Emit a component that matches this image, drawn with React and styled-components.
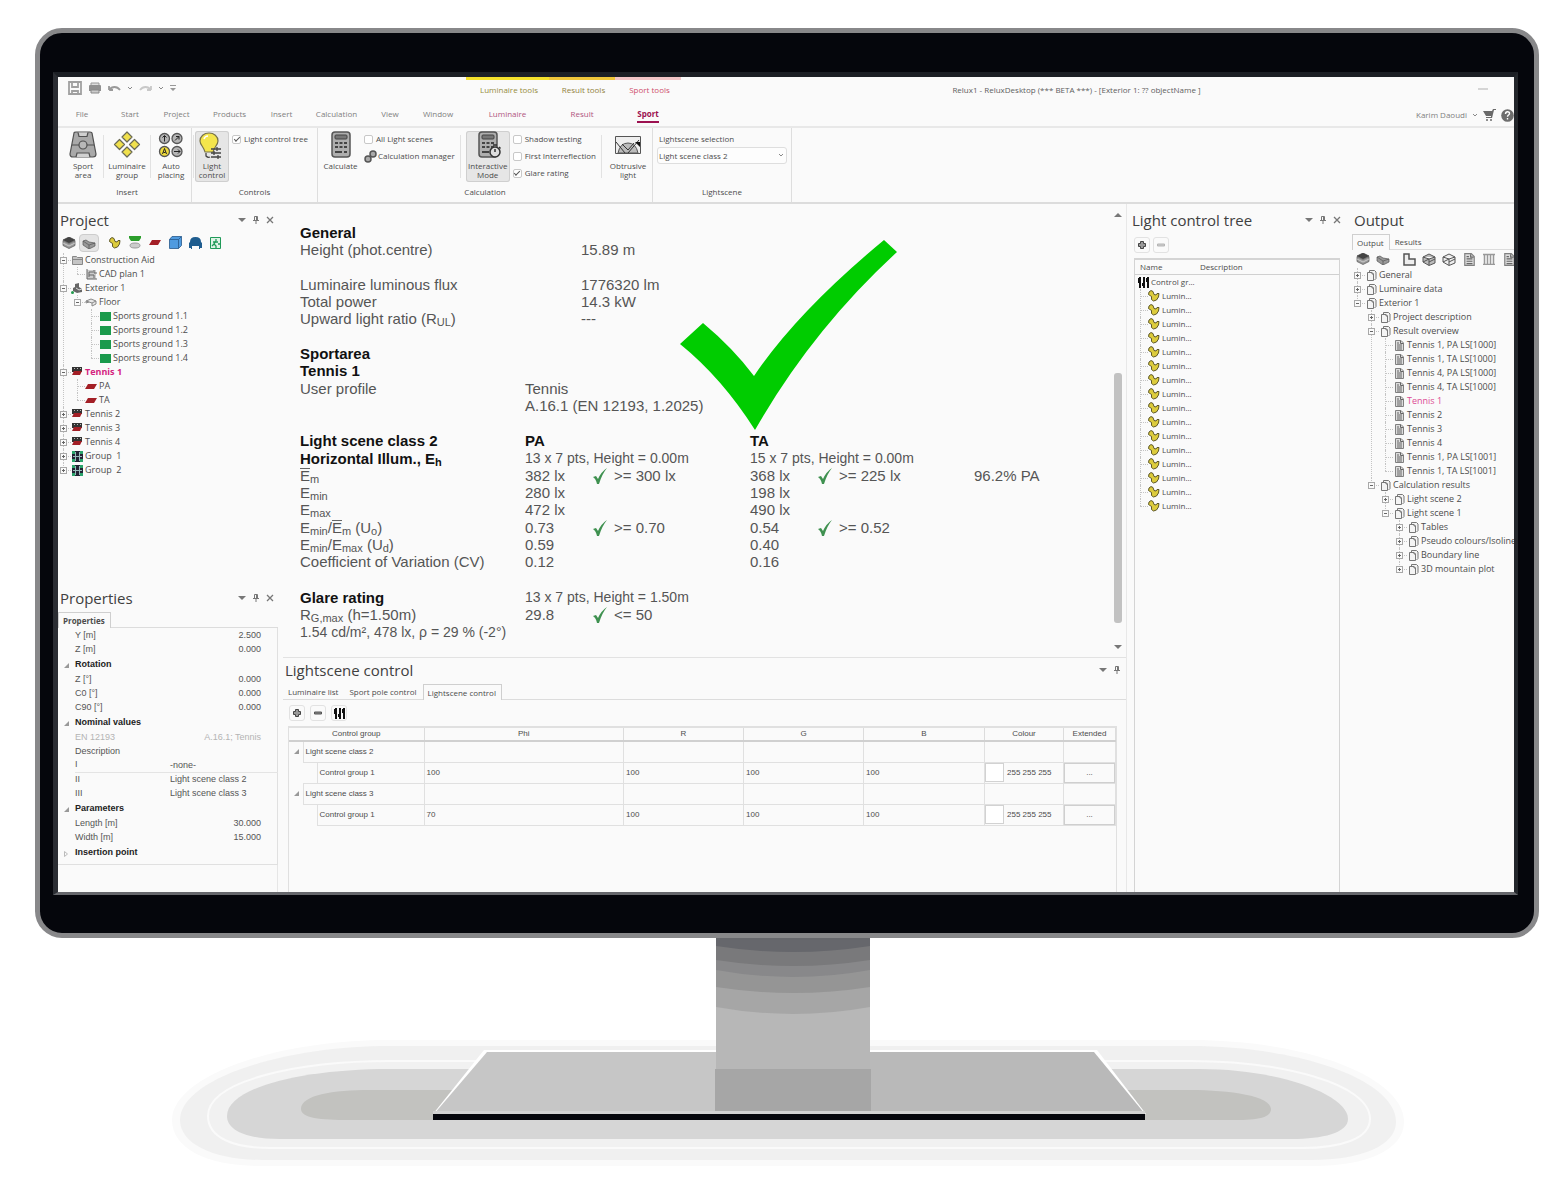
import React, { useState } from 'react';
import styled, { createGlobalStyle, css } from 'styled-components';

const GlobalStyle = createGlobalStyle`
    * {
        box-sizing: border-box;
    }
    body {
        margin: 0;
        background: #fff;
        color: #4c4c4c;
        font-family: "Open Sans", "Noto Sans", sans-serif;
        font-size: 9px;
        line-height: 14px;
    }
    button, input, select {
        font: inherit;
        color: inherit;
        margin: 0;
    }
    button {
        background: none;
        border: none;
        padding: 0;
    }
    ul {
        list-style: none;
        margin: 0;
        padding: 0;
    }
    svg {
        display: block;
        flex: none;
    }
    table {
        border-collapse: collapse;
        border-spacing: 0;
    }
    th, td {
        padding: 0;
        text-align: left;
    }
`

/* ---------- monitor ---------- */

const Page = styled.main`
    padding: 28px 27px 0 35px;
    overflow: hidden;
`

const Monitor = styled.div`
    background: #05060c;
    border: 5px solid #88888a;
    border-radius: 27px;
    padding: 39px 16px 38px 13px;
`

const Screen = styled.div`
    background: #fafafa;
    border-style: solid;
    border-width: 5px 4px 3px 5px;
    border-color: #1c1f25 #23262b #66676c #2b2d33;
    overflow: hidden;
`

const StandWrap = styled.div`
    margin: 0 -27px 0 -35px;
    & svg {
        width: 100%;
        height: auto;
    }
`

/* ---------- title bar and tabs ---------- */

const TitleBar = styled.header`
    display: flex;
    height: 24px;
    font-size: 8px;
`

const QuickBar = styled.div`
    width: 408px;
    display: flex;
    align-items: center;
    gap: 6px;
    padding: 0 0 2px 10px;
    color: #9a9a9a;
`

const ToolTab = styled.div`
    width: ${p => p.$w}px;
    border-top: 3px solid ${p => p.$bar};
    color: ${p => p.$color};
    text-align: center;
    padding: 3px 0 0 3px;
    white-space: nowrap;
`

const WindowTitle = styled.div`
    flex: 1;
    text-align: center;
    padding-top: 6px;
    color: #5e5e5e;
    white-space: nowrap;
`

const WindowButtons = styled.div`
    width: 42px;
    padding: 11px 0 0 6px;
    color: #b0b0b0;
`

const TabBar = styled.nav`
    display: flex;
    height: 27px;
    padding-top: 3px;
    border-bottom: 2px solid #e8e8e8;
    font-size: 8px;
`

const RibbonTab = styled.button`
    width: ${p => p.$w}px;
    color: ${p => p.$accent ? '#b05580' : '#808080'};
    & span {
        display: inline-block;
        border-bottom: 2px solid transparent;
    }
    ${p => p.$active && css`
        color: #9c1150;
        font-weight: 700;
        & span {
            border-color: #9c1150;
        }
    `}
`

const Account = styled.div`
    margin-left: auto;
    display: flex;
    align-items: center;
    gap: 5px;
    color: #808080;
    white-space: nowrap;
    & svg {
        color: #6a6a6a;
    }
`

/* ---------- ribbon ---------- */

const Ribbon = styled.div`
    display: flex;
    height: 76px;
    padding-left: 5px;
    border-bottom: 2px solid #dcdcdc;
    font-size: 8px;
`

const Group = styled.section`
    width: ${p => p.$w}px;
    display: flex;
    flex-direction: column;
    padding-top: 3px;
    border-right: 1px solid #dedede;
    & h3 {
        margin: 3px 0 0;
        font-size: 8px;
        font-weight: 400;
        text-align: center;
    }
`

const GroupBody = styled.div`
    display: flex;
    height: 51px;
    & > * {
        flex-shrink: 0;
    }
`

const BigButton = styled.button`
    width: ${p => p.$w}px;
    height: 51px;
    display: flex;
    flex-direction: column;
    align-items: center;
    gap: 2px;
    line-height: 9px;
    border-radius: 3px;
    ${p => p.$pressed && css`
        background: #e6e6e6;
        box-shadow: inset 0 0 0 1px #cfcfcf;
    `}
`

const Divider = styled.div`
    width: 1px;
    margin: 4px ${p => p.$gap || 0}px;
    background: #e2e2e2;
`

const CheckList = styled.div`
    display: flex;
    flex-direction: column;
    gap: 3px;
    padding: 1px 0 0 ${p => p.$pad || 3}px;
    white-space: nowrap;
`

const CheckLabel = styled.label`
    display: flex;
    align-items: center;
    gap: 3px;
    & input {
        appearance: none;
        width: 9px;
        height: 9px;
        border: 1px solid #c8c8c8;
        border-radius: 2px;
        background: #fff;
        display: grid;
        place-items: center;
    }
    & input:checked::after {
        content: "";
        width: 5px;
        height: 2px;
        margin-bottom: 2px;
        border-left: 1px solid #555;
        border-bottom: 1px solid #555;
        transform: rotate(-45deg);
    }
`

const LinkButton = styled.button`
    display: flex;
    align-items: center;
    gap: 1px;
    height: 14px;
`

const SelectField = styled.label`
    display: flex;
    flex-direction: column;
    gap: 1px;
    padding: 1px 4px 0 4px;
    flex: 1;
    & > span {
        padding-left: 2px;
    }
`

const SelectBox = styled.div`
    position: relative;
    & select {
        appearance: none;
        width: 100%;
        height: 17px;
        border: 1px solid #dedede;
        border-radius: 3px;
        background: #fdfdfd;
        padding: 0 1px;
    }
    & svg {
        position: absolute;
        right: 3px;
        top: 6px;
        pointer-events: none;
    }
`

/* ---------- panels ---------- */

const Workspace = styled.div`
    display: flex;
    min-height: 688px;
`

const Side = styled.aside`
    width: ${p => p.$w}px;
    flex: none;
    display: flex;
    flex-direction: column;
    overflow: hidden;
    padding-left: ${p => p.$pad || 0}px;
`

const Centre = styled.div`
    flex: 1;
    min-width: 0;
    display: flex;
    flex-direction: column;
    padding-left: 5px;
    border-right: 1px solid #e8e8e8;
`

const PanelHead = styled.div`
    display: flex;
    align-items: center;
    height: ${p => p.$low ? 24 : 28}px;
    padding: ${p => p.$low ? 0 : 4}px 4px 0 2px;
    flex: none;
    & h2 {
        margin: 0;
        flex: 1;
        font-size: 15px;
        line-height: 20px;
        font-weight: 400;
        color: #404040;
        white-space: nowrap;
    }
    & div {
        display: flex;
        align-items: center;
        gap: 5px;
        color: #777;
    }
`

const ToolRow = styled.div`
    display: flex;
    align-items: center;
    height: ${p => p.$h || 18}px;
    gap: ${p => p.$gap || 0}px;
    padding-left: ${p => p.$pad || 0}px;
    flex: none;
`

const ToolButton = styled.button`
    width: 20px;
    height: 18px;
    display: grid;
    place-items: center;
    flex: none;
    border-radius: 4px;
    background: ${p => p.$pressed ? '#e4e4e4' : 'none'};
    border: 1px solid ${p => p.$pressed ? '#cdcdcd' : 'transparent'};
    margin-right: ${p => p.$after || 0}px;
`

const SmallButton = styled.button`
    width: 16px;
    height: 16px;
    display: grid;
    place-items: center;
    border: 1px solid #e2e2e2;
    border-radius: 3px;
`

const Tabs = styled.div`
    display: flex;
    height: 18px;
    padding-top: 2px;
    border-bottom: 1px solid #dcdcdc;
    font-size: 8px;
    flex: none;
`

const PanelTab = styled.button`
    padding: 0 5px 0 4px;
    white-space: nowrap;
    border: solid transparent;
    border-width: 1px 1px 0;
    ${p => p.$active && css`
        border-color: #cfcfcf;
        background: #fafafa;
        margin-bottom: -1px;
        font-weight: ${p.$bold ? 700 : 400};
    `}
`

/* ---------- trees ---------- */

const Branch = styled.ul`
    & & {
        margin-left: 14px;
    }
    & > li {
        position: relative;
    }
    /* dotted guide lines behind the toggles */
    & > li::before {
        content: "";
        position: absolute;
        left: 5px;
        top: 0;
        bottom: 0;
        border-left: 1px dotted #c4c4c4;
    }
    & > li:last-child::before {
        bottom: auto;
        height: 7px;
    }
    & > li::after {
        content: "";
        position: absolute;
        left: 5px;
        top: 7px;
        width: 8px;
        border-top: 1px dotted #c4c4c4;
    }
`

const Row = styled.div`
    position: relative;
    z-index: 1;
    display: flex;
    align-items: center;
    height: 14px;
    font-size: ${p => p.$size || 9}px;
    white-space: pre;
    color: ${p => p.$color || '#4c4c4c'};
    font-weight: ${p => p.$bold ? 700 : 400};
`

const ToggleSlot = styled.span`
    width: 11px;
    display: grid;
    place-items: center;
    flex: none;
`

const Toggle = styled.button`
    width: 7px;
    height: 7px;
    border: 1px solid #a8a8a8;
    background: #fafafa;
    display: grid;
    place-items: center;
`

const IconSlot = styled.span`
    width: 16px;
    display: grid;
    place-items: center;
    flex: none;
`

const ControlBox = styled.div`
    flex: 1;
    margin: 0 5px 0 4px;
    border: solid #d4d4d4;
    border-width: 2px 1px 0;
`

const ControlHead = styled.div`
    display: grid;
    grid-template-columns: 60px 1fr;
    height: 15px;
    padding-left: 5px;
    border-bottom: 1px solid #d0d0d0;
    font-size: 8px;
`

/* ---------- properties ---------- */

const PropTable = styled.table`
    width: 100%;
    font-family: "Liberation Sans", Arial, sans-serif;
    font-size: 9px;
    border-right: 1px solid #e0e0e0;
    border-bottom: 1px solid #e0e0e0;
    table-layout: fixed;
    & tbody::after {
        content: "";
        display: block;
        height: 4px;
    }
`

const PropRow = styled.tr`
    height: ${p => p.$head ? 16 : 14}px;
    line-height: 13px;
    color: ${p => p.$dim ? '#b4b4b4' : p.$head ? '#222' : '#555'};
    & th {
        font-weight: ${p => p.$head ? 700 : 400};
        vertical-align: middle;
    }
    & td {
        padding-right: 16px;
        vertical-align: bottom;
        text-align: ${p => p.$left ? 'left' : 'right'};
    }
    & td:first-child {
        padding: 0 0 3px 6px;
    }
    ${p => p.$line && css`
        & th:last-of-type, & td:last-child {
            border-bottom: 1px solid #e4e4e4;
        }
    `}
`

const PropFill = styled.div`
    flex: 1;
    border-right: 1px solid #e6e6e6;
`

/* ---------- report ---------- */

const ReportArea = styled.div`
    position: relative;
    flex: 1;
    display: flex;
    justify-content: space-between;
    padding: 20px 4px 0 17px;
    overflow: hidden;
`

const Report = styled.article`
    font-family: "Liberation Sans", Arial, sans-serif;
    font-size: 15px;
    line-height: 17px;
    color: #555;
    & table {
        table-layout: fixed;
        white-space: nowrap;
    }
    & table + table {
        margin-top: 18px;
    }
    & th {
        font-weight: 400;
    }
    & tr {
        height: 17px;
    }
    & sub {
        font-size: 11px;
        line-height: 0;
        vertical-align: -2px;
    }
    & small {
        font-size: 14px;
    }
    & strong {
        color: #111;
    }
    & tbody + tbody::before {
        content: "";
        display: block;
        height: 1px;
    }
`

const Limit = styled.span`
    display: flex;
    align-items: center;
    gap: 7px;
`

const BarLetter = styled.span`
    display: inline-block;
    line-height: 13px;
    border-top: 1px solid #666;
`

const BigTick = styled.svg`
    position: absolute;
    left: 396px;
    top: 35px;
`

const ScrollBar = styled.div`
    width: 8px;
    margin: -12px 0 7px;
    display: flex;
    flex-direction: column;
    align-items: center;
    color: #777;
`

const Thumb = styled.div`
    width: 8px;
    height: 250px;
    margin: auto 0 22px;
    border-radius: 3px;
    background: #c2c2c2;
`

/* ---------- lightscene control ---------- */

const ScenePanel = styled.section`
    border-top: 1px solid #e2e2e2;
    min-height: 235px;
    display: flex;
    flex-direction: column;
`

const SceneBox = styled.div`
    flex: 1;
    margin: 0 9px 0 5px;
    border: solid #e0e0e0;
    border-width: 2px 1px 0;
`

const SceneTable = styled.table`
    width: 100%;
    table-layout: fixed;
    font-family: "Liberation Sans", Arial, sans-serif;
    font-size: 8px;
    & thead th {
        height: 13px;
        line-height: 12px;
        font-weight: 400;
        text-align: center;
        border-right: 1px solid #dcdcdc;
        border-bottom: 2px solid #d0d0d0;
    }
    & tbody tr {
        height: 21px;
    }
    & tbody td {
        border: 1px solid #e0e0e0;
        padding-left: 2px;
    }
    & tbody td.gutter {
        border: none;
        padding: 0 0 0 5px;
    }
    & tbody td.flush {
        padding: 0;
    }
`

const ColourCell = styled.div`
    display: flex;
    align-items: center;
    gap: 3px;
    white-space: nowrap;
    & i {
        width: 19px;
        height: 19px;
        border: 1px solid #d2d2d2;
        background: #fff;
    }
`

const MoreButton = styled.button`
    display: block;
    width: 100%;
    height: 20px;
    border: 1px solid #cfcfcf;
`

/* ---------- icons ---------- */

const Chevron = ({ size = 6 }) => (
    <svg width={size} height="5" viewBox="0 0 6 5" fill="none" stroke="#888"><path d="M1 1l2 2 2-2" /></svg>
)

const Arrow = ({ up }) => (
    <svg width="8" height="5" viewBox="0 0 8 5" fill="currentColor"><path d={up ? 'M0 5h8L4 1z' : 'M0 0h8L4 4z'} /></svg>
)

/* drop-down mark at the end of the quick access bar */
const MoreMark = () => (
    <svg width="6" height="7" viewBox="0 0 6 7" fill="#999"><path d="M0 0h6v1H0zM0 3h6L3 6z" /></svg>
)

const Pin = () => (
    <svg width="10" height="10" viewBox="0 0 10 10" fill="none" stroke="currentColor"><path d="M3.500 1.500h3v4h-3zM2 5.500h6M5 5.500V9M5.500 1.500v4" /></svg>
)

const Cross = () => (
    <svg width="8" height="8" viewBox="0 0 8 8" fill="none" stroke="currentColor" strokeWidth="1.300"><path d="M1 1l6 6M7 1L1 7" /></svg>
)

const Plus = () => (
    <svg width="10" height="10" viewBox="0 0 10 10" fill="#999" stroke="#444"><path d="M3.500 1.500h3v2h2v3h-2v2h-3v-2h-2v-3h2z" /></svg>
)

const Minus = ({ dim }) => (
    <svg width="10" height="10" viewBox="0 0 10 10" fill={dim ? '#ccc' : '#888'} stroke={dim ? '#b5b5b5' : '#555'}><path d="M1.500 4h7v2h-7z" /></svg>
)

const Sliders = () => (
    <svg width="11" height="11" viewBox="0 0 11 11" fill="#111"><path d="M1 0h2v11H1zM5 0h2v11H5zM9 0h2v11H9zM0 1h3v5H0zM4 6h3v3H4zM8 1h3v4H8z" /></svg>
)

const Save = () => (
    <svg width="14" height="14" viewBox="0 0 14 14" fill="none" stroke="#a0a0a0" strokeWidth="1.800"><path d="M1 1h12v12H1zM4 1v5h6V1M4 13v-3h6v3" /></svg>
)

const Printer = () => (
    <svg width="14" height="14" viewBox="0 0 14 14"><path d="M3 2h8v3H3z" fill="#ddd" stroke="#999" /><path d="M1 5q0-1 1-1h10q1 0 1 1v5H1z" fill="#909090" /><path d="M3 9h8v3H3z" fill="#ccc" stroke="#888" /></svg>
)

const Undo = ({ flip }) => (
    <svg width="13" height="8" viewBox="0 0 13 8" fill="none" stroke={flip ? '#c8c8c8' : '#999'} strokeWidth="1.800">
        <path d={flip ? 'M12 6H8M12 6V2M12 6C9 2 4 2 1 6' : 'M1 6h4M1 6V2M1 6c3-4 8-4 11 0'} />
    </svg>
)

const Cart = () => (
    <svg width="13" height="12" viewBox="0 0 13 12" fill="currentColor"><path d="M13 0v1h-2l-2 8H3V8h5v-1H3L0 2h9l1-2z" /><circle cx="4" cy="11" r="1" /><circle cx="8" cy="11" r="1" /></svg>
)

const Help = () => (
    <svg width="13" height="13" viewBox="0 0 13 13"><circle cx="6.500" cy="6.500" r="6.300" fill="#6e6e6e" /><path d="M4.500 5c0-3 4-3 4-.5 0 1.500-2 1.500-2 3.200M6.500 9v1.500" stroke="#fff" strokeWidth="1.400" fill="none" /></svg>
)

const SportArea = () => (
    <svg width="28" height="28" viewBox="0 0 28 28" fill="#a9a9a9" stroke="#505050" strokeWidth="1.200">
        <path d="M5 2q0-1 2-1h14q2 0 2 1l4 21q0 3-3 3H4q-3 0-3-3z" /><path d="M9 1.500l1 4h8l1-4M7 26l1-4h12l1 4" fill="#d0d0d0" />
        <path d="M3 14h7M18 14h7" /><circle cx="14" cy="14" r="4" fill="#b8b8b8" />
    </svg>
)

const Diamonds = () => (
    <svg width="28" height="28" viewBox="0 0 28 28" fill="#f0e04c" stroke="#6a6a55" strokeWidth="1.200">
        <path d="M14 1l5 5-5 5-5-5zM14 16l5 5-5 5-5-5zM6.500 8.500l5 5-5 5-5-5zM21.500 8.500l5 5-5 5-5-5z" strokeLinejoin="round" />
    </svg>
)

const AutoPlacing = () => (
    <svg width="28" height="28" viewBox="0 0 28 28" fill="#b5b5b5" stroke="#555" strokeWidth="1.300">
        <circle cx="7.500" cy="7.500" r="5" /><circle cx="20" cy="7.500" r="5" /><circle cx="7.500" cy="20.500" r="5" fill="#f0dc3c" /><circle cx="20" cy="20.500" r="5" />
        <path d="M7.500 10.500V5M5.500 6.500l2-2 2 2M18 9.500l4-4M19 5.500h3v3M17 20.500h6M21 18.500l2 2-2 2M5.500 23l2-5.500 2 5.500M6.500 21.500h2" fill="none" stroke="#222" strokeWidth="1" />
    </svg>
)

const Bulb = () => (
    <svg width="28" height="28" viewBox="0 0 28 28">
        <path d="M11 2c-5 0-9 3.500-9 8 0 4 4 6 5 11h8c1-5 5-7 5-11 0-4.500-4-8-9-8z" fill="#f4e54c" stroke="#77724a" strokeWidth="1.200" />
        <path d="M6 8q1-3 4-3" fill="none" stroke="#fff" strokeWidth="1.500" />
        <path d="M8 22v3q2 2 4 1M13 18h10M13 22h10M13 26h10M19 16v4M16 20v4M20 24v4" stroke="#444" strokeWidth="1.300" fill="none" />
    </svg>
)

const Calculator = ({ timer }) => (
    <svg width="28" height="28" viewBox="0 0 28 28">
        <rect x="5" y="1" width="18" height="25" rx="3" fill="#aeaeae" stroke="#555" strokeWidth="1.500" />
        <rect x="8" y="4" width="12" height="4" rx="1" fill="#777" stroke="#444" />
        <path d="M8 12h3M12.500 12h3M17 12h3M8 16h3M12.500 16h3M17 16h3M8 21h7M17 21h3" stroke="#444" strokeWidth="2" />
        {timer && <g stroke="#333" strokeWidth="1.500"><circle cx="21" cy="21" r="5" fill="#ddd" /><path d="M21 21v-3M19 14h4M25 16l1.500 1.500" /></g>}
    </svg>
)

const Obtrusive = () => (
    <svg width="28" height="28" viewBox="0 0 28 28">
        <path d="M1.500 5.500h25v17h-25z" fill="#eee" stroke="#555" /><path d="M4 22q2-10 10-10t10 10z" fill="#bbb" stroke="#555" />
        <path d="M2 11l9 11M14 22L25 9M8 13l6 6 6-7" stroke="#333" fill="none" /><path d="M21 11h5v5z" fill="#111" />
    </svg>
)

const Gears = () => (
    <svg width="13" height="13" viewBox="0 0 13 13" fill="#aaa" stroke="#555" strokeWidth="1.500"><circle cx="4" cy="9" r="3" /><circle cx="9" cy="4" r="3" /></svg>
)

const Tick = () => (
    <svg width="14" height="16" viewBox="0 0 14 16" fill="#3f9150"><path d="M0 9l3-1 2 3Q8 4 14 0 9 6 6 16H4Q3 11 0 9z" /></svg>
)

const Lamp = () => (
    <svg width="12" height="12" viewBox="0 0 12 12" fill="#dccb3c" stroke="#4f4a1c" strokeWidth=".9"><path d="M1 2l2-1.500 2 1 1 3 2 .5 1-1.500 2 0-.5 3.500-2 3-3 1-2-1.500 0-3-3-2z" /></svg>
)

const Layers = ({ open }) => (
    <svg width="14" height="12" viewBox="0 0 14 12" strokeWidth=".7">
        {!open && <path d="M7 0l6 3-6 3-6-3z" fill="#444" stroke="#333" />}
        <path d={open ? 'M1 4l3-1 3 2 6 1v3l-6 3-6-4z' : 'M1 3.500l6 3 6-3v5l-6 3-6-3z'} fill="#999" stroke="#555" />
        {open && <path d="M1 4l6 4 6-2M7 8v4" fill="none" stroke="#555" />}
        {!open && <path d="M1 6l6 3 6-3" fill="none" stroke="#ddd" />}
    </svg>
)

const Box3d = ({ open }) => (
    <svg width="14" height="13" viewBox="0 0 14 13" fill={open ? '#eee' : '#bbb'} stroke="#555"><path d="M1 4l6-3 6 3v6l-6 2.500L1 9zM1 4l6 2 6-2M7 6v6M1 9l6-3M7 9l6-3" /></svg>
)

const LShape = () => (
    <svg width="13" height="13" viewBox="0 0 13 13" fill="#eee" stroke="#555" strokeWidth="1.500"><path d="M1 1h5v5h6v6H1z" /></svg>
)

const Doc = ({ w = 9, h = 11 }) => (
    <svg width={w} height={h} viewBox="0 0 9 11"><path d="M.5.5H6L8.500 3v7.500h-8z" fill="#ddd" stroke="#808080" /><path d="M2 3h2M2 5h5M2 7h5M2 9h5M5.500 1v2.500H8" stroke="#666" fill="none" /></svg>
)

const Columns = () => (
    <svg width="12" height="12" viewBox="0 0 12 12" fill="none" stroke="#999"><path d="M0 1.500h12M0 11.500h12M1.500 2v10M4.500 2v10M7.500 2v10M10.500 2v10" strokeWidth="1.500" /></svg>
)

const Pages = () => (
    <svg width="11" height="11" viewBox="0 0 11 11" fill="#f4f4f4" stroke="#777"><path d="M3.500 3V.5H8.500L10 2v6.500L8.500 10M1.500 2.500H6L7.500 4v6.500h-6zM6 2.500V4h1.500" /></svg>
)

const Folder = () => (
    <svg width="11" height="9" viewBox="0 0 11 9"><path d="M.5 8.500v-8h4l1 1h5v7z" fill="#c4c4c4" stroke="#888" /><path d="M1 3.500h9" stroke="#888" /></svg>
)

const Cad = () => (
    <svg width="11" height="11" viewBox="0 0 11 11"><path d="M1 1h9v9H1z" fill="#ccc" /><path d="M1 0v10h10M3 8V3h4M3 6h5v3M8 1v3h3" stroke="#666" fill="none" /></svg>
)

const Exterior = () => (
    <svg width="12" height="11" viewBox="0 0 12 11"><path d="M4 1l4-1v4l3 2v3L6 10 2 8V5l2-1z" fill="#666" /><path d="M5 5l3 2 3-1" stroke="#ddd" fill="none" /><circle cx="1.500" cy="9.500" r="1.500" fill="#1f9a4c" /></svg>
)

const Floor = () => (
    <svg width="12" height="9" viewBox="0 0 12 9" fill="#e8e8e8" stroke="#888"><path d="M1 3l5-2 5 2v3L7 8V5L4 4 1 5zM1 3l3 1M7 5l4-2" /></svg>
)

const Green = () => (
    <svg width="11" height="9" viewBox="0 0 11 9"><path d="M0 0h11v9H0z" fill="#1a9a4c" /></svg>
)

const Court = () => (
    <svg width="12" height="5" viewBox="0 0 12 5"><path d="M3 0h9L9 5H0z" fill="#a31f26" /></svg>
)

const Courts = () => (
    <svg width="12" height="10" viewBox="0 0 12 10"><path d="M1 0h10v5H1z" fill="#333" /><path d="M3 1.500h1M6 1.500h1M9 1.500h1" stroke="#bbb" /><path d="M3 4h8L9 8H1z" fill="#a31f26" /></svg>
)

const GroupIcon = () => (
    <svg width="11" height="11" viewBox="0 0 11 11"><path d="M0 0h11v11H0z" fill="#223" /><path d="M0 0h3v3H0zM8 0h3v3H8zM0 8h3v3H0zM8 8h3v3H8z" fill="#2aa36a" /><path d="M3.500 1v9M7.500 1v9M1 5.500h9" stroke="#9bb" /></svg>
)

const Spot = () => (
    <svg width="14" height="13" viewBox="0 0 14 13"><path d="M1 0h12v2l-2 3H3L1 2z" fill="#2c9e2c" /><ellipse cx="7" cy="9.500" rx="5" ry="2.500" fill="#ccc" stroke="#999" /></svg>
)

const Cube = () => (
    <svg width="13" height="13" viewBox="0 0 13 13" fill="#4f9be0" stroke="#27588a" strokeWidth=".8"><path d="M.5 3.500L3 .5h9.500v9l-3 3h-9zM.5 3.500h9v9M9.500 3.500l3-3" /></svg>
)

const Chair = () => (
    <svg width="13" height="12" viewBox="0 0 13 12"><path d="M1 5q0-5 5.500-5T12 5l1 1v5h-2v1h-1V9H3v3H2v-1H0V6z" fill="#1f5d8f" /></svg>
)

const Exit = () => (
    <svg width="11" height="12" viewBox="0 0 11 12"><path d="M.5.500h10v11H.5z" fill="#dff2e6" stroke="#1f9a58" /><path d="M6 2v2M3 5h5M6 4L4 7l2 2v2M4 7l-2 2M8 7h2" stroke="#1f9a58" fill="none" strokeWidth="1.300" /></svg>
)

const Marker = ({ open }) => (
    <svg width="5" height="6" viewBox="0 0 5 6">{open ? <path d="M5 0v5H0z" fill="#999" /> : <path d="M.5.500l3 2.500-3 2.500z" fill="none" stroke="#bbb" />}</svg>
)

/* the neck darkens in curved bands towards the monitor */
const neckBands = [
    [69, 76, '#a6a6a6'],
    [49, 55, '#959595'],
    [32, 39, '#88888a'],
    [22, 28, '#79797b'],
    [8, 14, '#66676c'],
]

const Stand = () => (
    <svg viewBox="0 0 1566 265" aria-hidden="true">
        <path d="M172 182C172 140 270 102 390 102h800c120 0 214 38 214 82 0 28-38 44-90 44H260c-54 0-88-18-88-46z" fill="#fafafa" />
        <path d="M180 182C180 142 280 108 390 108h800c110 0 206 34 206 76 0 24-36 38-84 38H262c-48 0-82-16-82-40z" fill="#f0f0f0" />
        <path d="M208 178C208 142 300 123 390 123h800c90 0 180 22 180 58 0 20-30 29-68 29H270c-36 0-62-10-62-32z" fill="#f1f1f1" stroke="#fafafa" strokeWidth="2" />
        <path d="M227 178C227 150 300 131 390 131h810c80 0 148 26 148 50 0 14-26 20-56 20H280c-32 0-53-8-53-23z" fill="#d6d6d6" />
        <path d="M301 171c0-14 32-19 69-19h820c40 0 81 6 81 19s-30 11-61 11H350c-30 0-49-2-49-11z" fill="#c2c2bf" />
        <path d="M484 112h613l49 64H433z" fill="#fff" />
        <path d="M487 114h229v62H434z" fill="#c6c6c6" />
        <path d="M870 114h224l51 62H870z" fill="#b9b9b9" />
        <path d="M716 0h154v132H716z" fill="#b7b7b7" />
        {neckBands.map(([edge, mid, fill]) => (
            <path key={edge} d={`M716 0h154v${edge}Q793 ${mid * 2 - edge} 716 ${edge}z`} fill={fill} />
        ))}
        <path d="M715 131h156v44H715z" fill="#a6a6a6" />
        <path d="M433 173h712v3H433z" fill="#d2d2d2" />
        <path d="M433 176h712v6H433z" fill="#05060c" />
    </svg>
)

const icons = {
    folder: <Folder />, cad: <Cad />, exterior: <Exterior />, floor: <Floor />, green: <Green />,
    court: <Court />, courts: <Courts />, group: <GroupIcon />, pages: <Pages />, doc: <Doc />, lamp: <Lamp />,
}

/* ---------- data ---------- */

const projectTree = [
    { label: 'Construction Aid', icon: 'folder', open: true, items: [{ label: 'CAD plan 1', icon: 'cad' }] },
    {
        label: 'Exterior 1', icon: 'exterior', open: true, items: [{
            label: 'Floor', icon: 'floor', open: true,
            items: [1, 2, 3, 4].map(n => ({ label: `Sports ground 1.${n}`, icon: 'green' })),
        }],
    },
    { label: 'Tennis 1', icon: 'courts', open: true, color: '#d4237f', bold: true, items: [{ label: 'PA', icon: 'court' }, { label: 'TA', icon: 'court' }] },
    { label: 'Tennis 2', icon: 'courts', closed: true },
    { label: 'Tennis 3', icon: 'courts', closed: true },
    { label: 'Tennis 4', icon: 'courts', closed: true },
    { label: 'Group  1', icon: 'group', closed: true },
    { label: 'Group  2', icon: 'group', closed: true },
]

const results = ['Tennis 1, PA LS[1000]', 'Tennis 1, TA LS[1000]', 'Tennis 4, PA LS[1000]', 'Tennis 4, TA LS[1000]', 'Tennis 1', 'Tennis 2', 'Tennis 3', 'Tennis 4', 'Tennis 1, PA LS[1001]', 'Tennis 1, TA LS[1001]']

const outputTree = [
    { label: 'General', icon: 'pages', closed: true },
    { label: 'Luminaire data', icon: 'pages', closed: true },
    {
        label: 'Exterior 1', icon: 'pages', open: true, items: [
            { label: 'Project description', icon: 'pages', closed: true },
            { label: 'Result overview', icon: 'pages', open: true, items: results.map(label => ({ label, icon: 'doc', color: label === 'Tennis 1' ? '#dc4a94' : undefined })) },
            {
                label: 'Calculation results', icon: 'pages', open: true, items: [
                    { label: 'Light scene 2', icon: 'pages', closed: true },
                    { label: 'Light scene 1', icon: 'pages', open: true, items: ['Tables', 'Pseudo colours/Isoline', 'Boundary line', '3D mountain plot'].map(label => ({ label, icon: 'pages', closed: true })) },
                ],
            },
        ],
    },
]

const luminaires = Array.from({ length: 16 }, () => ({ label: 'Lumin...', icon: 'lamp' }))

const properties = [
    { name: 'Y [m]', value: '2.500' },
    { name: 'Z [m]', value: '0.000' },
    { name: 'Rotation', head: true, open: true },
    { name: 'Z [°]', value: '0.000' },
    { name: 'C0 [°]', value: '0.000' },
    { name: 'C90 [°]', value: '0.000' },
    { name: 'Nominal values', head: true, open: true },
    { name: 'EN 12193', value: 'A.16.1; Tennis', dim: true },
    { name: 'Description', value: '' },
    { name: 'I', value: '-none-', left: true, line: true },
    { name: 'II', value: 'Light scene class 2', left: true },
    { name: 'III', value: 'Light scene class 3', left: true },
    { name: 'Parameters', head: true, open: true },
    { name: 'Length [m]', value: '30.000' },
    { name: 'Width [m]', value: '15.000' },
    { name: 'Insertion point', head: true },
]

const tabs = [
    ['File', 48], ['Start', 48], ['Project', 45], ['Products', 61], ['Insert', 43], ['Calculation', 67], ['View', 40], ['Window', 56],
    ['Luminaire', 83, true], ['Result', 66, true], ['Sport', 66, true],
]

const scenes = [
    { name: 'Light scene class 2', phi: 100 },
    { name: 'Light scene class 3', phi: 70 },
]

/* ---------- components ---------- */

function TreeItem({ node, size }) {
    const [open, setOpen] = useState(!!node.open);
    return (
        <li>
            <Row $color={node.color} $bold={node.bold} $size={size}>
                <ToggleSlot>
                    {(node.open || node.closed) && (
                        <Toggle aria-label={`Toggle ${node.label}`} onClick={() => setOpen(!open)}>
                            <svg width="5" height="5" viewBox="0 0 5 5" stroke="#666"><path d={open ? 'M1 2.500h3' : 'M1 2.500h3M2.500 1v3'} /></svg>
                        </Toggle>
                    )}
                </ToggleSlot>
                <IconSlot>{icons[node.icon]}</IconSlot>
                {node.label}
            </Row>
            {open && node.items && <Tree nodes={node.items} size={size} />}
        </li>
    )
}

function Tree({ nodes, size }) {
    return <Branch>{nodes.map((node, i) => <TreeItem key={i} node={node} size={size} />)}</Branch>
}

function Head({ title, close = true, plain, low }) {
    return (
        <PanelHead $low={low}>
            <h2>{title}</h2>
            {!plain && <div><Arrow /><Pin />{close && <Cross />}</div>}
        </PanelHead>
    )
}

function Check({ children, checked }) {
    return <CheckLabel><input type="checkbox" defaultChecked={checked} />{children}</CheckLabel>
}

function TopBar() {
    const [active, setActive] = useState('Sport');
    return (
        <>
            <TitleBar>
                <QuickBar><Save /><Printer /><Undo /><Chevron /><Undo flip /><Chevron /><MoreMark /></QuickBar>
                <ToolTab $w={83} $bar="#f4e02c" $color="#958c3c">Luminaire tools</ToolTab>
                <ToolTab $w={66} $bar="#f0c63a" $color="#93823e">Result tools</ToolTab>
                <ToolTab $w={66} $bar="#f3c6c8" $color="#cf4f6c">Sport tools</ToolTab>
                <WindowTitle>Relux1 - ReluxDesktop (*** BETA ***) - [Exterior 1: ?? objectName ]</WindowTitle>
                <WindowButtons><svg width="10" height="2" viewBox="0 0 10 2"><path d="M0 1h10" stroke="currentColor" /></svg></WindowButtons>
            </TitleBar>
            <TabBar>
                {tabs.map(([name, w, accent]) => (
                    <RibbonTab key={name} $w={w} $accent={accent} $active={name === active} onClick={() => setActive(name)}><span>{name}</span></RibbonTab>
                ))}
                <Account>Karim Daoudi<Chevron /><Cart /><Help /></Account>
            </TabBar>
        </>
    )
}

function RibbonBar() {
    return (
        <Ribbon>
            <Group $w={129}>
                <GroupBody>
                    <BigButton $w={40}><SportArea /><span>Sport<br />area</span></BigButton>
                    <Divider />
                    <BigButton $w={46}><Diamonds /><span>Luminaire<br />group</span></BigButton>
                    <Divider />
                    <BigButton $w={40}><AutoPlacing /><span>Auto<br />placing</span></BigButton>
                </GroupBody>
                <h3>Insert</h3>
            </Group>
            <Group $w={126}>
                <GroupBody>
                    <Divider $gap={1} />
                    <BigButton $w={34} $pressed><Bulb /><span>Light<br />control</span></BigButton>
                    <CheckList><Check checked>Light control tree</Check></CheckList>
                </GroupBody>
                <h3>Controls</h3>
            </Group>
            <Group $w={335}>
                <GroupBody>
                    <BigButton $w={45}><Calculator /><span>Calculate</span></BigButton>
                    <CheckList $pad={1}>
                        <Check>All Light scenes</Check>
                        <LinkButton><Gears />Calculation manager</LinkButton>
                    </CheckList>
                    <Divider $gap={5} />
                    <BigButton $w={44} $pressed><Calculator timer /><span>Interactive<br />Mode</span></BigButton>
                    <CheckList>
                        <Check>Shadow testing</Check>
                        <Check>First Interreflection</Check>
                        <Check checked>Glare rating</Check>
                    </CheckList>
                    <Divider $gap={5} />
                    <BigButton $w={42}><Obtrusive /><span>Obtrusive<br />light</span></BigButton>
                </GroupBody>
                <h3>Calculation</h3>
            </Group>
            <Group $w={139}>
                <GroupBody>
                    <SelectField>
                        <span>Lightscene selection</span>
                        <SelectBox>
                            <select defaultValue="2">
                                <option value="2">Light scene class 2</option>
                                <option value="3">Light scene class 3</option>
                            </select>
                            <Chevron />
                        </SelectBox>
                    </SelectField>
                </GroupBody>
                <h3>Lightscene</h3>
            </Group>
        </Ribbon>
    )
}

const ProjectPanel = styled.section`
    min-height: 382px;
`

function LeftSide() {
    return (
        <Side $w={220}>
            <ProjectPanel>
                <Head title="Project" />
                <ToolRow $h={21} $pad={1}>
                    <ToolButton><Layers /></ToolButton>
                    <ToolButton $pressed $after={6}><Layers open /></ToolButton>
                    <ToolButton><Lamp /></ToolButton>
                    <ToolButton><Spot /></ToolButton>
                    <ToolButton><Court /></ToolButton>
                    <ToolButton><Cube /></ToolButton>
                    <ToolButton><Chair /></ToolButton>
                    <ToolButton><Exit /></ToolButton>
                </ToolRow>
                <Tree nodes={projectTree} />
            </ProjectPanel>
            <Head title="Properties" low />
            <Tabs><PanelTab $active $bold>Properties</PanelTab></Tabs>
            <PropTable>
                <colgroup><col width="17" /><col width="95" /><col /></colgroup>
                <tbody>
                    {properties.map(p => (
                        <PropRow key={p.name} $head={p.head} $dim={p.dim} $left={p.left} $line={p.line}>
                            <td>{p.head && <Marker open={p.open} />}</td>
                            <th scope="row">{p.name}</th>
                            <td>{p.value}</td>
                        </PropRow>
                    ))}
                </tbody>
            </PropTable>
            <PropFill />
        </Side>
    )
}

function ReportView() {
    const limit = (text) => <Limit><Tick />{text}</Limit>;
    return (
        <ReportArea>
            <Report>
                <table>
                    <colgroup><col width="281" /><col /></colgroup>
                    <tbody>
                        <tr><th><strong>General</strong></th><td /></tr>
                        <tr><th>Height (phot.centre)</th><td>15.89 m</td></tr>
                    </tbody>
                </table>
                <table>
                    <colgroup><col width="281" /><col /></colgroup>
                    <tbody>
                        <tr><th>Luminaire luminous flux</th><td>1776320 lm</td></tr>
                        <tr><th>Total power</th><td>14.3 kW</td></tr>
                        <tr><th>Upward light ratio (R<sub>UL</sub>)</th><td>---</td></tr>
                    </tbody>
                </table>
                <table>
                    <colgroup><col width="225" /><col /></colgroup>
                    <tbody>
                        <tr><th><strong>Sportarea</strong></th><td /></tr>
                        <tr><th><strong>Tennis 1</strong></th><td /></tr>
                    </tbody>
                    <tbody>
                        <tr><th>User profile</th><td>Tennis</td></tr>
                        <tr><th /><td>A.16.1 (EN 12193, 1.2025)</td></tr>
                    </tbody>
                </table>
                <table>
                    <colgroup><col width="225" /><col width="68" /><col width="157" /><col width="68" /><col width="156" /><col /></colgroup>
                    <tbody>
                        <tr><th><strong>Light scene class 2</strong></th><td><strong>PA</strong></td><td /><td><strong>TA</strong></td><td /><td /></tr>
                        <tr><th><strong>Horizontal Illum., E<sub>h</sub></strong></th><td colSpan="2"><small>13 x 7 pts, Height = 0.00m</small></td><td colSpan="2"><small>15 x 7 pts, Height = 0.00m</small></td><td /></tr>
                        <tr><th><BarLetter>E</BarLetter><sub>m</sub></th><td>382 lx</td><td>{limit('>= 300 lx')}</td><td>368 lx</td><td>{limit('>= 225 lx')}</td><td>96.2% PA</td></tr>
                        <tr><th>E<sub>min</sub></th><td>280 lx</td><td /><td>198 lx</td><td /><td /></tr>
                        <tr><th>E<sub>max</sub></th><td>472 lx</td><td /><td>490 lx</td><td /><td /></tr>
                    </tbody>
                    <tbody>
                        <tr><th>E<sub>min</sub>/<BarLetter>E</BarLetter><sub>m</sub> (U<sub>o</sub>)</th><td>0.73</td><td>{limit('>= 0.70')}</td><td>0.54</td><td>{limit('>= 0.52')}</td><td /></tr>
                        <tr><th>E<sub>min</sub>/E<sub>max</sub> (U<sub>d</sub>)</th><td>0.59</td><td /><td>0.40</td><td /><td /></tr>
                        <tr><th>Coefficient of Variation (CV)</th><td>0.12</td><td /><td>0.16</td><td /><td /></tr>
                    </tbody>
                </table>
                <table>
                    <colgroup><col width="225" /><col width="68" /><col /></colgroup>
                    <tbody>
                        <tr><th><strong>Glare rating</strong></th><td colSpan="2"><small>13 x 7 pts, Height = 1.50m</small></td></tr>
                        <tr><th>R<sub>G,max</sub> (h=1.50m)</th><td>29.8</td><td>{limit('<= 50')}</td></tr>
                        <tr><th><small>1.54 cd/m², 478 lx, ρ = 29 % (-2°)</small></th><td /><td /></tr>
                    </tbody>
                </table>
            </Report>
            <BigTick width="218" height="192" viewBox="0 0 218 192" fill="#00cc00">
                <path d="M1 105L24 84Q54 109 75 137 118 73 205 1L218 13Q133 91 76 191 43 139 1 105z" />
            </BigTick>
            <ScrollBar><Arrow up /><Thumb /><Arrow /></ScrollBar>
        </ReportArea>
    )
}

function SceneControl() {
    return (
        <ScenePanel>
            <Head title="Lightscene control" close={false} low />
            <Tabs>
                <PanelTab>Luminaire list</PanelTab>
                <PanelTab>Sport pole control</PanelTab>
                <PanelTab $active>Lightscene control</PanelTab>
            </Tabs>
            <ToolRow $h={26} $gap={5} $pad={6}>
                <SmallButton aria-label="Add"><Plus /></SmallButton>
                <SmallButton aria-label="Remove"><Minus /></SmallButton>
                <SmallButton aria-label="Adjust"><Sliders /></SmallButton>
            </ToolRow>
            <SceneBox>
                <SceneTable>
                    <colgroup><col width="14" /><col width="14" /><col width="107" /><col /><col width="120" /><col width="120" /><col width="121" /><col width="79" /><col width="52" /></colgroup>
                    <thead>
                        <tr>
                            <th colSpan="3">Control group</th>
                            {['Phi', 'R', 'G', 'B', 'Colour', 'Extended'].map(h => <th key={h}>{h}</th>)}
                        </tr>
                    </thead>
                    <tbody>
                        {scenes.map(s => (
                            <React.Fragment key={s.name}>
                                <tr>
                                    <td className="gutter"><Marker open /></td>
                                    <td colSpan="2">{s.name}</td>
                                    <td /><td /><td /><td /><td /><td />
                                </tr>
                                <tr>
                                    <td className="gutter" /><td className="gutter" />
                                    <td>Control group 1</td>
                                    <td>{s.phi}</td><td>100</td><td>100</td><td>100</td>
                                    <td className="flush"><ColourCell><i />255 255 255</ColourCell></td>
                                    <td className="flush"><MoreButton>...</MoreButton></td>
                                </tr>
                            </React.Fragment>
                        ))}
                    </tbody>
                </SceneTable>
            </SceneBox>
        </ScenePanel>
    )
}

function LightControl() {
    return (
        <Side $w={218} $pad={3}>
            <Head title="Light control tree" />
            <ToolRow $h={26} $gap={3} $pad={4}>
                <SmallButton aria-label="Add"><Plus /></SmallButton>
                <SmallButton aria-label="Remove"><Minus dim /></SmallButton>
            </ToolRow>
            <ControlBox>
                <ControlHead><span>Name</span><span>Description</span></ControlHead>
                <Row $size={8}><IconSlot><Sliders /></IconSlot>Control gr...</Row>
                <Tree nodes={luminaires} size={8} />
            </ControlBox>
        </Side>
    )
}

function OutputPanel() {
    return (
        <Side $w={169} $pad={7}>
            <Head title="Output" plain />
            <Tabs><PanelTab $active>Output</PanelTab><PanelTab>Results</PanelTab></Tabs>
            <ToolRow $h={18} $pad={1}>
                <ToolButton><Layers /></ToolButton>
                <ToolButton><Layers open /></ToolButton>
                <Divider $gap={3} />
                <ToolButton><LShape /></ToolButton>
                <ToolButton><Box3d /></ToolButton>
                <ToolButton><Box3d open /></ToolButton>
                <ToolButton><Doc w={11} h={13} /></ToolButton>
                <ToolButton><Columns /></ToolButton>
                <ToolButton><Doc w={11} h={13} /></ToolButton>
            </ToolRow>
            <Tree nodes={outputTree} />
        </Side>
    )
}

function App() {
    return (
        <Page>
            <GlobalStyle />
            <Monitor>
                <Screen>
                    <TopBar />
                    <RibbonBar />
                    <Workspace>
                        <LeftSide />
                        <Centre>
                            <ReportView />
                            <SceneControl />
                        </Centre>
                        <LightControl />
                        <OutputPanel />
                    </Workspace>
                </Screen>
            </Monitor>
            <StandWrap><Stand /></StandWrap>
        </Page>
    )
}

export default App
